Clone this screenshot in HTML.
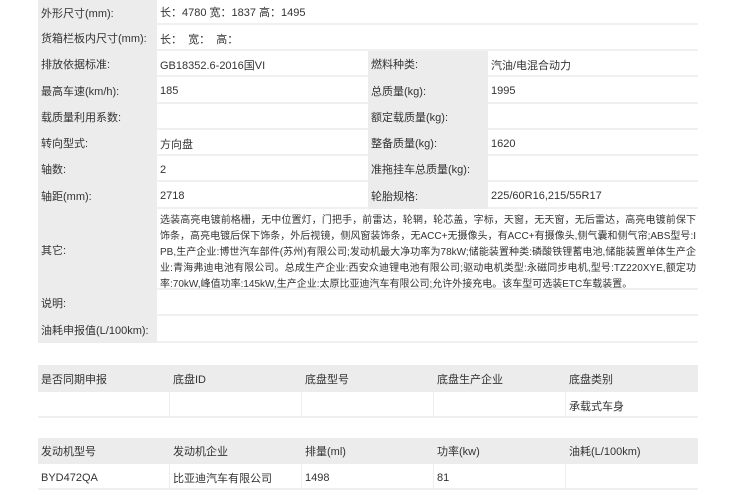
<!DOCTYPE html>
<html><head><meta charset="utf-8"><style>
body{margin:0;width:744px;height:496px;overflow:hidden;background:#fff;font-family:"Liberation Sans","Noto Sans CJK SC",sans-serif;color:#333;font-size:11px;position:relative}
.c{position:absolute;box-sizing:border-box;padding-left:3px;display:flex;align-items:center;white-space:nowrap}
.l{background:#ececec}
.v{background:#fff;border-bottom:2px solid #f0f0f0;padding-top:3px}
.ln{display:block;width:536px;text-align:justify;text-align-last:justify;height:16px;line-height:16px;font-size:10px;overflow:hidden;white-space:normal}
</style></head><body>
<div class="c l" style="left:38px;top:0;width:119px;height:343px;"></div>
<div class="c l" style="left:368px;top:51px;width:120px;height:158px;"></div>
<div class="c" style="left:38px;top:0;height:25px">外形尺寸(mm):</div>
<div class="c" style="left:38px;top:25px;height:26px">货箱栏板内尺寸(mm):</div>
<div class="c" style="left:38px;top:51px;height:26px">排放依据标准:</div>
<div class="c" style="left:38px;top:77px;height:27px">最高车速(km/h):</div>
<div class="c" style="left:38px;top:104px;height:26px">载质量利用系数:</div>
<div class="c" style="left:38px;top:130px;height:26px">转向型式:</div>
<div class="c" style="left:38px;top:156px;height:26px">轴数:</div>
<div class="c" style="left:38px;top:182px;height:27px">轴距(mm):</div>
<div class="c" style="left:38px;top:209px;height:81px">其它:</div>
<div class="c" style="left:38px;top:290px;height:26px">说明:</div>
<div class="c" style="left:38px;top:316px;height:27px">油耗申报值(L/100km):</div>

<div class="c v" style="left:157px;top:0;width:541px;height:25px;padding-top:1px">长：4780 宽：1837 高：1495</div>
<div class="c v" style="left:157px;top:25px;width:541px;height:26px">长：&nbsp; 宽：&nbsp; 高：</div>
<div class="c v" style="left:157px;top:51px;width:211px;height:26px">GB18352.6-2016国VI</div>
<div class="c v" style="left:157px;top:77px;width:211px;height:27px">185</div>
<div class="c v" style="left:157px;top:104px;width:211px;height:26px"></div>
<div class="c v" style="left:157px;top:130px;width:211px;height:26px">方向盘</div>
<div class="c v" style="left:157px;top:156px;width:211px;height:26px">2</div>
<div class="c v" style="left:157px;top:182px;width:211px;height:27px">2718</div>

<div class="c" style="left:368px;top:51px;height:26px">燃料种类:</div>
<div class="c" style="left:368px;top:77px;height:27px">总质量(kg):</div>
<div class="c" style="left:368px;top:104px;height:26px">额定载质量(kg):</div>
<div class="c" style="left:368px;top:130px;height:26px">整备质量(kg):</div>
<div class="c" style="left:368px;top:156px;height:26px">准拖挂车总质量(kg):</div>
<div class="c" style="left:368px;top:182px;height:27px">轮胎规格:</div>
<div class="c v" style="left:488px;top:51px;width:210px;height:26px">汽油/电混合动力</div>
<div class="c v" style="left:488px;top:77px;width:210px;height:27px">1995</div>
<div class="c v" style="left:488px;top:104px;width:210px;height:26px"></div>
<div class="c v" style="left:488px;top:130px;width:210px;height:26px">1620</div>
<div class="c v" style="left:488px;top:156px;width:210px;height:26px"></div>
<div class="c v" style="left:488px;top:182px;width:210px;height:27px">225/60R16,215/55R17</div>

<div class="c v" style="left:157px;top:209px;width:541px;height:81px;display:block;padding-top:4px">
<span class="ln">选装高亮电镀前格栅，无中位置灯，门把手，前雷达，轮辋，轮芯盖，字标，天窗，无天窗，无后雷达，高亮电镀前保下</span>
<span class="ln">饰条，高亮电镀后保下饰条，外后视镜，侧风窗装饰条，无ACC+无摄像头，有ACC+有摄像头,侧气囊和侧气帘;ABS型号:I</span>
<span class="ln">PB,生产企业:博世汽车部件(苏州)有限公司;发动机最大净功率为78kW;储能装置种类:磷酸铁锂蓄电池,储能装置单体生产企</span>
<span class="ln">业:青海弗迪电池有限公司。总成生产企业:西安众迪锂电池有限公司;驱动电机类型:永磁同步电机,型号:TZ220XYE,额定功</span>
<span class="ln" style="text-align-last:left">率:70kW,峰值功率:145kW,生产企业:太原比亚迪汽车有限公司;允许外接充电。该车型可选装ETC车载装置。</span>
</div>
<div class="c v" style="left:157px;top:290px;width:541px;height:26px"></div>
<div class="c v" style="left:157px;top:316px;width:541px;height:27px"></div>

<div class="c l" style="left:38px;top:365px;width:660px;height:27px"></div>
<div class="c" style="left:38px;top:365px;height:27px">是否同期申报</div>
<div class="c" style="left:170px;top:365px;height:27px">底盘ID</div>
<div class="c" style="left:302px;top:365px;height:27px">底盘型号</div>
<div class="c" style="left:434px;top:365px;height:27px">底盘生产企业</div>
<div class="c" style="left:566px;top:365px;height:27px">底盘类别</div>
<div class="c v" style="left:38px;top:392px;width:132px;height:26px;border-right:1px solid #eee"></div>
<div class="c v" style="left:170px;top:392px;width:132px;height:26px;border-right:1px solid #eee"></div>
<div class="c v" style="left:302px;top:392px;width:132px;height:26px;border-right:1px solid #eee"></div>
<div class="c v" style="left:434px;top:392px;width:132px;height:26px;border-right:1px solid #eee"></div>
<div class="c v" style="left:566px;top:392px;width:132px;height:26px">承载式车身</div>

<div class="c l" style="left:38px;top:438px;width:660px;height:26px"></div>
<div class="c" style="left:38px;top:438px;height:26px">发动机型号</div>
<div class="c" style="left:170px;top:438px;height:26px">发动机企业</div>
<div class="c" style="left:302px;top:438px;height:26px">排量(ml)</div>
<div class="c" style="left:434px;top:438px;height:26px">功率(kw)</div>
<div class="c" style="left:566px;top:438px;height:26px">油耗(L/100km)</div>
<div class="c v" style="left:38px;top:464px;width:132px;height:26px;border-right:1px solid #eee">BYD472QA</div>
<div class="c v" style="left:170px;top:464px;width:132px;height:26px;border-right:1px solid #eee">比亚迪汽车有限公司</div>
<div class="c v" style="left:302px;top:464px;width:132px;height:26px;border-right:1px solid #eee">1498</div>
<div class="c v" style="left:434px;top:464px;width:132px;height:26px;border-right:1px solid #eee">81</div>
<div class="c v" style="left:566px;top:464px;width:132px;height:26px"></div>
</body></html>
